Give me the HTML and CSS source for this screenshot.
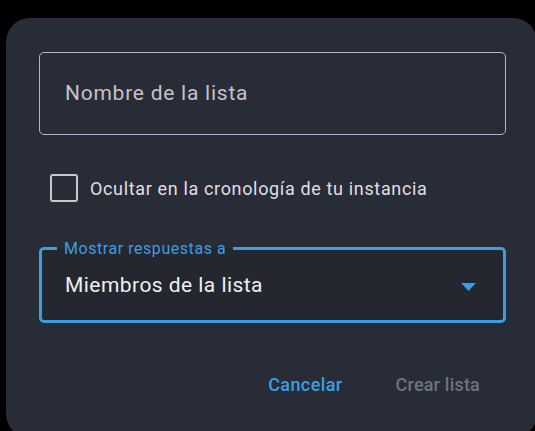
FILE: index.html
```html
<!DOCTYPE html>
<html lang="es">
<head>
<meta charset="utf-8">
<title>Nueva lista</title>
<link rel="stylesheet" href="styles.css">
</head>
<body>
<div class="dialog">
  <div class="text-field">
    <span class="placeholder">Nombre de la lista</span>
  </div>
  <label class="check-row">
    <span class="checkbox"></span>
    <span class="check-label">Ocultar en la cronología de tu instancia</span>
  </label>
  <div class="select">
    <span class="select-label">Mostrar respuestas a</span>
    <span class="select-value">Miembros de la lista</span>
    <svg class="arrow" width="15" height="8" viewBox="0 0 15 8"><path d="M0 0h15L7.5 8z" fill="#3a9ee4"/></svg>
  </div>
  <div class="actions">
    <span class="btn btn-cancel">Cancelar</span>
    <span class="btn btn-create">Crear lista</span>
  </div>
</div>
</body>
</html>
```

FILE: styles.css
```css
html, body {
  margin: 0;
  padding: 0;
  background: #000;
  overflow: hidden;
  height: 431px;
}

body {
  font-family: Roboto, "Noto Sans", sans-serif;
}

.dialog {
  margin: 18px 0 0 6px;
  width: 531px;
  height: 420px;
  box-sizing: border-box;
  border-radius: 24px;
  background: #282c37;
  padding: 34px 31px 0 33px;
  display: flex;
  flex-direction: column;
}

.text-field {
  height: 83px;
  box-sizing: border-box;
  border: 1.5px solid #acb7cd;
  border-radius: 5px;
  display: flex;
  align-items: center;
  padding-left: 25px;
}

.placeholder {
  font-size: 21px;
  color: #c6c1cc;
  letter-spacing: 0.75px;
  margin-top: -2px;
}

.check-row {
  display: flex;
  align-items: center;
  margin: 39px 0 0 11px;
  gap: 12px;
}

.checkbox {
  width: 28px;
  height: 28px;
  box-sizing: border-box;
  border: 2.5px solid #cdc4d0;
  border-radius: 3px;
}

.check-label {
  font-size: 18px;
  color: #e0dee6;
  letter-spacing: 0.65px;
}

.select {
  position: relative;
  margin-top: 45px;
  height: 76px;
  box-sizing: border-box;
  border: 3px solid #3a9ee4;
  border-radius: 5px;
  background: #24272f;
  display: flex;
  align-items: center;
  padding: 0 27px 0 23px;
}

.select-label {
  position: absolute;
  top: -11px;
  left: 15px;
  padding: 0 7px;
  font-size: 16px;
  line-height: 19px;
  letter-spacing: 0.55px;
  color: #3a9ee4;
  background: linear-gradient(#282c37 50%, #24272f 50%);
}

.select-value {
  flex: 1;
  font-size: 21px;
  color: #f0eef2;
  letter-spacing: 0.45px;
}

.arrow {
  margin-top: 3px;
}

.actions {
  display: flex;
  justify-content: flex-end;
  gap: 53px;
  margin-top: 50px;
  padding-right: 26px;
}

.btn {
  font-size: 18px;
  font-weight: 500;
  line-height: 24px;
}

.btn-cancel {
  color: #3a9ee4;
  letter-spacing: 0.4px;
}

.btn-create {
  color: #6e7380;
  letter-spacing: 0.2px;
}
```
